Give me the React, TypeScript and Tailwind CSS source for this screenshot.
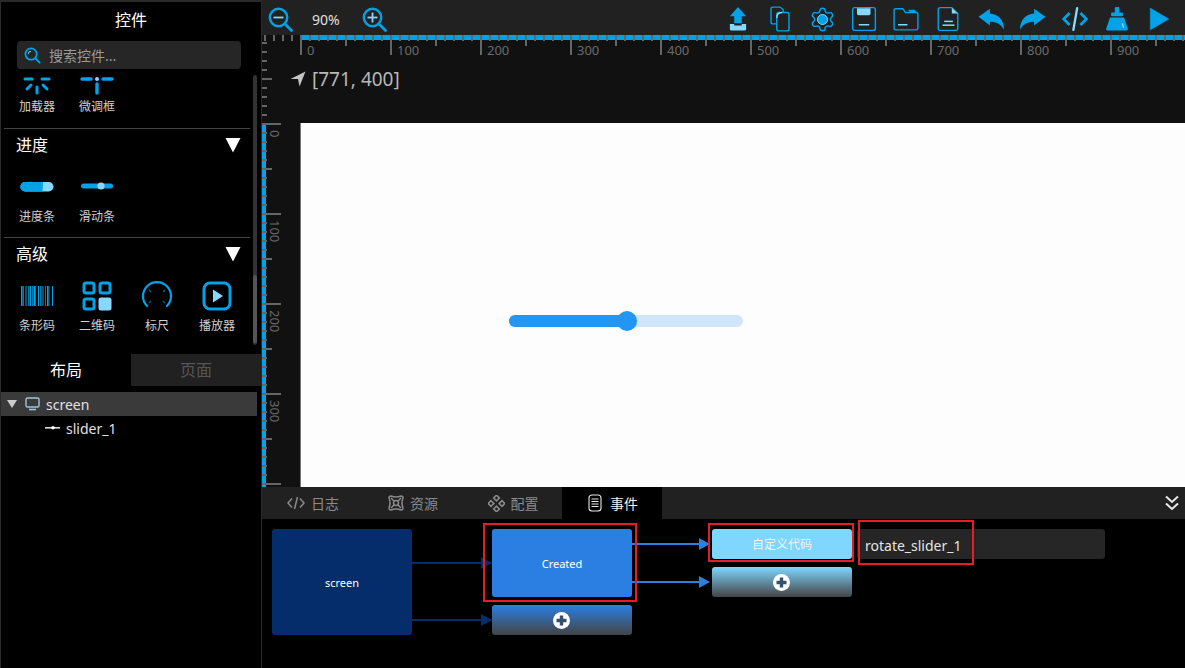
import { Settings } from "lucide-react";
import type { ReactNode } from "react";

const BLUE = "#00a2e8";
const LIGHT = "#86d8ff";

function Ico({ size = 26, vb = 24, children }: { size?: number; vb?: number; children: ReactNode }) {
  return (
    <svg width={size} height={size} viewBox={`0 0 ${vb} ${vb}`} fill="none">
      {children}
    </svg>
  );
}

const toolbarIcons = [
  <Ico key="upload">
    <path d="M12 1 L19.5 9.5 H15.5 V16 H8.5 V9.5 H4.5 Z" fill={BLUE} />
    <path d="M4.5 16.5 H8.5 V18 H15.5 V16.5 H19.5 V21.5 Q19.5 22.5 18.5 22.5 H5.5 Q4.5 22.5 4.5 21.5 Z" fill={LIGHT} />
  </Ico>,
  <Ico key="copy">
    <path d="M9 16.5 H5.5 Q3.7 16.5 3.7 14.7 V2.8 Q3.7 1 5.5 1 H12 L15 3.5 V6" stroke={BLUE} strokeWidth="1.3" />
    <path d="M9 8 Q9 6 11 6 H18.3 Q20.3 6 20.3 8 V21 Q20.3 23 18.3 23 H11 Q9 23 9 21 Z" stroke={BLUE} strokeWidth="1.3" />
    <path d="M9 11 Q9 6 14 6" stroke={LIGHT} strokeWidth="1.3" />
  </Ico>,
  <span key="gear" className="relative flex items-center justify-center">
    <Settings size={27} color={BLUE} strokeWidth={1.3} />
    <span className="absolute w-[11px] h-[11px] rounded-full bg-[#00a2e8] border border-[#86d8ff]" />
  </span>,
  <Ico key="save">
    <rect x="1.5" y="1.5" width="21" height="21" rx="2" stroke={BLUE} strokeWidth="1.3" />
    <path d="M5.5 2 H18 V7 Q18 8.5 16.5 8.5 H7 Q5.5 8.5 5.5 7 Z" fill={LIGHT} />
    <rect x="7" y="16.5" width="10" height="1.5" rx="0.7" fill={LIGHT} />
  </Ico>,
  <Ico key="folder">
    <path d="M1 4 Q1 2.5 2.5 2.5 H9 L11.5 6 H21.5 Q23 6 23 7.5 V20.5 Q23 22 21.5 22 H2.5 Q1 22 1 20.5 Z" stroke={BLUE} strokeWidth="1.3" />
    <path d="M14 3.5 H20 L22.5 6.5 H16 Z" fill={BLUE} />
    <rect x="4.5" y="16.5" width="9" height="1.5" rx="0.7" fill={LIGHT} />
  </Ico>,
  <Ico key="file">
    <path d="M5 1.5 H15.5 L21 7 V21 Q21 22.5 19.5 22.5 H5 Q3 22.5 3 21 V3 Q3 1.5 5 1.5 Z" stroke={BLUE} strokeWidth="1.3" />
    <path d="M15.5 1.5 L21 7 H15.5 Z" fill={LIGHT} />
    <rect x="8.5" y="13.5" width="8" height="1.4" fill={LIGHT} />
    <rect x="7" y="17" width="11" height="1.4" fill={LIGHT} />
  </Ico>,
  <Ico key="undo">
    <path d="M0.5 10 L11 2.5 V7 C19 7.5 24 13 24 22 C21 16.5 17 14.5 11 14.5 V18 Z" fill={BLUE} />
  </Ico>,
  <Ico key="redo">
    <path d="M23.5 10 L13 2.5 V7 C5 7.5 0 13 0 22 C3 16.5 7 14.5 13 14.5 V18 Z" fill={BLUE} />
  </Ico>,
  <Ico key="code">
    <path d="M7 6.5 L1.5 12 L7 17.5" stroke={BLUE} strokeWidth="2.6" />
    <path d="M17 6.5 L22.5 12 L17 17.5" stroke={BLUE} strokeWidth="2.6" />
    <path d="M14 2 L10.5 22" stroke={LIGHT} strokeWidth="2.2" strokeLinecap="round" />
  </Ico>,
  <Ico key="brush">
    <rect x="10" y="1" width="4" height="6" rx="1" fill={BLUE} />
    <rect x="6.5" y="6" width="11" height="3.5" rx="1" fill={BLUE} />
    <path d="M5.5 10.5 H18.5 L22 21 Q22.2 22.5 21 22.5 H3 Q1.8 22.5 2 21 Z" fill={BLUE} />
    <path d="M17 16 L18 20" stroke={LIGHT} strokeWidth="1.3" />
  </Ico>,
  <Ico key="play">
    <path d="M4 2 L21 12 L4 22 Z" fill={BLUE} stroke={BLUE} strokeWidth="0.6" strokeLinejoin="round" />
  </Ico>,
];

function ZoomIcon({ plus }: { plus?: boolean }) {
  return (
    <svg width="25" height="25" viewBox="0 0 25 25" fill="none">
      <circle cx="10.5" cy="10.5" r="8.7" stroke={BLUE} strokeWidth="2.4" />
      <path d="M17 17 L23.5 23.5" stroke={BLUE} strokeWidth="2.8" strokeLinecap="round" />
      <path d="M5.5 10.5 H15.5" stroke={LIGHT} strokeWidth="1.8" />
      {plus && <path d="M10.5 5.5 V15.5" stroke={LIGHT} strokeWidth="1.8" />}
    </svg>
  );
}

const widgetIcons: Record<string, ReactNode> = {
  spinner: (
    <svg width="34" height="18" viewBox="0 0 34 18" fill="none" stroke={BLUE} strokeWidth="3" strokeLinecap="round">
      <path d="M5 2 H12" />
      <path d="M22 2 H29" />
      <path d="M11 8 L7 12" />
      <path d="M23 8 L27 12" />
      <path d="M17 10 V16" />
    </svg>
  ),
  spinbox: (
    <svg width="34" height="18" viewBox="0 0 34 18" fill="none">
      <path d="M2 2 H11 M23 2 H32 M17 7 V16" stroke={BLUE} strokeWidth="3.4" strokeLinecap="round" />
      <circle cx="17" cy="2" r="2" fill={LIGHT} />
    </svg>
  ),
  progress: (
    <svg className="mt-[1px]" width="34" height="12" viewBox="0 0 34 12">
      <rect x="0.5" y="1" width="33" height="9.5" rx="4.7" fill={LIGHT} />
      <path d="M5 1 H23 L22.5 10.5 H5 A4.7 4.7 0 0 1 5 1 Z" fill={BLUE} />
    </svg>
  ),
  slider: (
    <svg width="34" height="12" viewBox="0 0 34 12">
      <rect x="1" y="3.5" width="32" height="5" rx="2.5" fill={BLUE} />
      <circle cx="21" cy="6" r="3.6" fill={LIGHT} />
    </svg>
  ),
  barcode: (
    <svg width="34" height="22" viewBox="0 0 34 22">
      {[1, 3, 5.5, 8, 10, 12, 13.5, 15, 18, 20, 22.5, 25, 27, 28.5, 32].map((x, i) => (
        <rect key={x} x={x} y="1" width={i % 3 === 0 ? 1.6 : 1} height="20" fill={i % 2 ? "#0a76a8" : BLUE} />
      ))}
    </svg>
  ),
  qr: (
    <svg width="30" height="30" viewBox="0 0 30 30" fill="none">
      <rect x="2" y="2" width="10" height="10" rx="2" stroke={BLUE} strokeWidth="3" />
      <rect x="18" y="2" width="10" height="10" rx="2" stroke={BLUE} strokeWidth="3" />
      <rect x="2" y="18" width="10" height="10" rx="2" stroke={BLUE} strokeWidth="3" />
      <rect x="16.5" y="16.5" width="13" height="13" rx="2.5" fill={LIGHT} />
    </svg>
  ),
  gauge: (
    <svg width="32" height="30" viewBox="0 0 32 30" fill="none">
      <path d="M6 25 A14 14 0 1 1 26 25" stroke={BLUE} strokeWidth="2.2" strokeLinecap="round" />
      <path d="M8 9 L10 11 M24 9 L22 11 M8 22 L10 20 M24 22 L22 20" stroke="#0a5f86" strokeWidth="1.4" />
    </svg>
  ),
  player: (
    <svg width="30" height="30" viewBox="0 0 30 30" fill="none">
      <rect x="2" y="2" width="26" height="26" rx="6" stroke={BLUE} strokeWidth="3" />
      <path d="M11 8.5 L21 15 L11 21.5 Z" fill={LIGHT} />
    </svg>
  ),
};

function Widget({ icon, label, h, gap }: { icon: string; label: string; h: number; gap: number }) {
  return (
    <div className="w-[60px] flex flex-col items-center">
      <div className="flex items-center justify-center" style={{ height: h, marginBottom: gap }}>
        {widgetIcons[icon]}
      </div>
      <span className="text-[12px] leading-[16px] text-[#d0d0d0]">{label}</span>
    </div>
  );
}

function SectionHead({ title }: { title: string }) {
  return (
    <div className="flex items-center justify-between h-[32px] pl-[12px] pr-[17px]">
      <span className="text-[16px] text-white">{title}</span>
      <svg width="16" height="16" viewBox="0 0 16 16">
        <path d="M0.5 1 H15.5 L8 15.5 Z" fill="#fff" />
      </svg>
    </div>
  );
}

function Sidebar() {
  return (
    <aside className="w-[262px] h-full shrink-0 flex flex-col bg-black border-t-2 border-l border-r border-[#2a2a2a]">
      <div className="h-[36px] flex items-center justify-center text-[16px] text-white">控件</div>
      <div className="ml-[16px] w-[224px] h-[28px] mt-[3px] rounded bg-[#262626] flex items-center pl-[7px] gap-[8px]">
        <svg width="17" height="17" viewBox="0 0 18 18" fill="none">
          <circle cx="7.5" cy="7.5" r="6" stroke={BLUE} strokeWidth="1.8" />
          <path d="M12 12 L16.5 16.5" stroke={BLUE} strokeWidth="2" strokeLinecap="round" />
          <path d="M4.5 7.5 A3 3 0 0 1 7.5 4.5" stroke={LIGHT} strokeWidth="1" />
        </svg>
        <span className="text-[14px] text-[#9a9a9a]">搜索控件...</span>
      </div>
      <div className="relative h-[270px] mt-[6px] overflow-hidden">
        <div className="px-[3px]">
          <div className="flex px-[3px]">
            <Widget icon="spinner" label="加载器" h={21} gap={3} />
            <Widget icon="spinbox" label="微调框" h={21} gap={3} />
          </div>
          <div className="mt-[13px] mr-[8px] border-t border-[#444]" />
          <SectionHead title="进度" />
          <div className="flex px-[3px] mt-[10px]">
            <Widget icon="progress" label="进度条" h={30} gap={8} />
            <Widget icon="slider" label="滑动条" h={30} gap={8} />
          </div>
          <div className="mt-[12px] mr-[8px] border-t border-[#444]" />
          <SectionHead title="高级" />
          <div className="flex px-[3px] mt-[8px]">
            <Widget icon="barcode" label="条形码" h={36} gap={4} />
            <Widget icon="qr" label="二维码" h={36} gap={4} />
            <Widget icon="gauge" label="标尺" h={36} gap={4} />
            <Widget icon="player" label="播放器" h={36} gap={4} />
          </div>
        </div>
        <div className="absolute right-[4px] top-0 bottom-0 w-[4px] rounded-full bg-[#333]">
          <div className="absolute bottom-[2px] h-[68px] w-full rounded-full bg-[#555]" />
        </div>
      </div>
      <div className="flex h-[32px] mt-[9px] text-[16px]">
        <div className="w-[130px] flex items-center justify-center text-white">布局</div>
        <div className="flex-1 flex items-center justify-center bg-[#212121] text-[#555]">页面</div>
      </div>
      <div className="mt-[6px] mr-[4px] text-[14px] text-[#e0e0e0]">
        <div className="h-[24px] bg-[#3a3a3a] flex items-center pl-[5px]">
          <svg width="12" height="10" viewBox="0 0 12 10">
            <path d="M1 1 H11 L6 9 Z" fill="#ccc" />
          </svg>
          <svg className="ml-[7px]" width="15" height="14" viewBox="0 0 15 14" fill="none">
            <rect x="1" y="1" width="13" height="9" rx="1.5" stroke="#9fc6dc" strokeWidth="1.4" />
            <path d="M4 12.5 H11" stroke="#9fc6dc" strokeWidth="1.6" />
          </svg>
          <span className="ml-[6px]">screen</span>
        </div>
        <div className="h-[24px] flex items-center pl-[44px]">
          <svg width="15" height="6" viewBox="0 0 15 6">
            <rect x="0" y="2" width="15" height="1.6" fill="#ddd" />
            <circle cx="8" cy="2.8" r="1.8" fill="#fff" />
          </svg>
          <span className="ml-[6px]">slider_1</span>
        </div>
      </div>
    </aside>
  );
}

const hTicks = Array.from({ length: 104 }, (_, i) => 2 + i * 9);
const vTicks = Array.from({ length: 51 }, (_, i) => 7 + i * 9);

function Rulers() {
  return (
    <svg className="absolute left-0 top-0" width="923" height="452" viewBox="0 0 923 452">
      <rect x="39" y="0" width="884" height="5" fill={BLUE} />
      <rect x="0" y="88" width="4" height="364" fill={BLUE} />
      {hTicks.map((x, i) => {
        const n = i - 4;
        const long = n % 10 === 0;
        const mid = n % 5 === 0;
        return <rect key={x} x={x} y="0" width="2" height={long ? 20 : mid ? 11 : 6} fill="#666" />;
      })}
      {vTicks.map((y, i) => {
        const n = i - 9;
        const long = n % 10 === 0;
        const mid = n % 5 === 0;
        return <rect key={y} x="0" y={y} width={long ? 19 : mid ? 10 : 5} height="2" fill="#666" />;
      })}
      <g fill="#6a6a6a" fontSize="13" fontFamily="'Noto Sans', sans-serif">
        {[0, 100, 200, 300, 400, 500, 600, 700, 800, 900].map((v, i) => (
          <text key={v} x={45 + i * 90} y="20">
            {v}
          </text>
        ))}
        {[0, 100, 200, 300].map((v, i) => (
          <text key={v} transform={`translate(8 ${95 + i * 90}) rotate(90)`}>
            {v}
          </text>
        ))}
      </g>
    </svg>
  );
}

function TabIcon({ name }: { name: string }) {
  const c = name === "event" ? "#e8e8e8" : "#8a8a8a";
  if (name === "code")
    return (
      <svg width="18" height="14" viewBox="0 0 18 14" fill="none" stroke={c} strokeWidth="1.5">
        <path d="M5 2.5 L1 7 L5 11.5 M13 2.5 L17 7 L13 11.5 M10.5 1 L7.5 13" />
      </svg>
    );
  if (name === "res")
    return (
      <svg width="16" height="16" viewBox="0 0 16 16" fill="none" stroke={c} strokeWidth="1.5">
        <circle cx="8" cy="8" r="2.5" />
        <path d="M3 1 Q8 3 13 1 Q15 1 15 3 Q13 8 15 13 Q15 15 13 15 Q8 13 3 15 Q1 15 1 13 Q3 8 1 3 Q1 1 3 1 Z" />
        <path d="M3 3 L6 6 M13 3 L10 6 M3 13 L6 10 M13 13 L10 10" />
      </svg>
    );
  if (name === "cfg")
    return (
      <svg width="17" height="17" viewBox="0 0 17 17" fill="none" stroke={c} strokeWidth="1.6">
        <rect x="6.5" y="1" width="4" height="4" transform="rotate(45 8.5 3)" />
        <rect x="6.5" y="12" width="4" height="4" transform="rotate(45 8.5 14)" />
        <rect x="1" y="6.5" width="4" height="4" transform="rotate(45 3 8.5)" />
        <rect x="12" y="6.5" width="4" height="4" transform="rotate(45 14 8.5)" />
      </svg>
    );
  return (
    <svg width="14" height="18" viewBox="0 0 14 18" fill="none" stroke={c} strokeWidth="1.1">
      <rect x="1" y="1" width="12" height="16" rx="3" />
      <path d="M3.5 5 H10.5 M3.5 7.5 H10.5 M3.5 10 H10.5 M3.5 12.5 H10.5" />
    </svg>
  );
}

const tabs = [
  { id: "code", label: "日志" },
  { id: "res", label: "资源" },
  { id: "cfg", label: "配置" },
  { id: "event", label: "事件" },
];

function AddButton({ from }: { from: string }) {
  return (
    <div
      className="w-[140px] h-[30px] rounded-[3px] flex items-center justify-center"
      style={{ background: `linear-gradient(${from}, #444)` }}
    >
      <svg className="mt-[1px] ml-[-1px]" width="17" height="17" viewBox="0 0 17 17">
        <circle cx="8.5" cy="8.5" r="8.5" fill="#fff" />
        <path d="M8.5 3.5 V13.5 M3.5 8.5 H13.5" stroke="#34506e" strokeWidth="3.4" />
      </svg>
    </div>
  );
}

function Connectors() {
  const arrow = (y: number, x1: number, x2: number, c: string) => (
    <g key={`${y}-${x1}`}>
      <path d={`M${x1} ${y} H${x2 - 8}`} stroke={c} strokeWidth="2" />
      <path d={`M${x2 - 11} ${y - 6} L${x2} ${y} L${x2 - 11} ${y + 6} Z`} fill={c} />
    </g>
  );
  return (
    <svg className="absolute left-0 top-0 pointer-events-none" width="923" height="149" viewBox="0 0 923 149">
      {arrow(44, 150, 230, "#052d6b")}
      {arrow(101, 150, 230, "#052d6b")}
      {arrow(25, 370, 448, "#2b7fe3")}
      {arrow(63, 370, 448, "#2b7fe3")}
    </svg>
  );
}

function EventPanel() {
  return (
    <div className="relative flex-1 bg-black pl-[10px] pt-[10px] flex text-[11px] text-white">
      <div className="w-[140px] h-[106px] pt-[2px] rounded-[3px] bg-[#052d6b] flex items-center justify-center">screen</div>
      <div className="ml-[80px] w-[140px] flex flex-col gap-[8px]">
        <div className="h-[68px] pt-[2px] rounded-[3px] bg-[#2b7fe3] flex items-center justify-center">Created</div>
        <AddButton from="#2b7fe3" />
      </div>
      <div className="ml-[80px] w-[140px] flex flex-col gap-[8px]">
        <div className="h-[30px] pt-[2px] rounded-[3px] bg-[#7fd6ff] flex items-center justify-center text-[12px] text-[#f4f4f4]">自定义代码</div>
        <AddButton from="#7fd6ff" />
      </div>
      <div className="ml-[5px] w-[248px] h-[30px] pt-[2px] rounded-[3px] bg-[#262626] flex items-center pl-[8px] text-[14px] text-[#e4e4e4]">
        rotate_slider_1
      </div>
      <Connectors />
      <div className="absolute left-[221px] top-[4px] w-[154px] h-[79px] border-2 border-[#e81c24]" />
      <div className="absolute left-[446px] top-[4px] w-[146px] h-[39px] border-2 border-[#e81c24]" />
      <div className="absolute left-[596px] top-[1px] w-[116px] h-[45px] border-2 border-[#e81c24]" />
    </div>
  );
}

export default function App() {
  return (
    <div
      className="w-[1185px] h-[668px] flex overflow-hidden bg-black"
      style={{ fontFamily: "'Noto Sans', 'Noto Sans CJK SC', sans-serif" }}
    >
      <Sidebar />
      <main className="flex-1 min-w-0 flex flex-col">
        <div className="h-[35px] pt-[3px] bg-[#212121] flex items-center">
          <div className="ml-[6px]">
            <ZoomIcon />
          </div>
          <span className="ml-[19px] w-[34px] text-[14px] text-[#e0e0e0]">90%</span>
          <div className="ml-[16px]">
            <ZoomIcon plus />
          </div>
          <div className="ml-auto mr-[5px] flex">
            {toolbarIcons.map((icon, i) => (
              <div key={i} className="w-[42.1px] flex items-center justify-center">
                {icon}
              </div>
            ))}
          </div>
        </div>
        <div className="relative h-[452px] bg-[#111] overflow-hidden">
          <div className="ml-[38px] mt-[88px] h-[364px] border-l border-[#777] bg-[#fdfdfe] pl-[208px] pt-[192px]">
            <div className="relative w-[234px] h-[12px] rounded-full bg-[#cfe5fa]">
              <div className="w-[118px] h-full rounded-full bg-[#2196f3]" />
              <div className="absolute left-[108px] top-[-4px] w-[20px] h-[20px] rounded-full bg-[#2196f3]" />
            </div>
          </div>
          <Rulers />
          <div className="absolute left-[28px] top-[30px] flex items-center gap-[6px] text-[19px] text-[#b8b8b8]">
            <svg width="16" height="16" viewBox="0 0 16 16">
              <path d="M0.5 8 L15.5 0.5 L9.5 15.5 L8 8 Z" fill="#c4c4c4" />
            </svg>
            [771, 400]
          </div>
        </div>
        <div className="h-[32px] bg-[#212121] flex items-stretch">
          {tabs.map((t) => (
            <div
              key={t.id}
              className={
                t.id === "event"
                  ? "w-[100px] pl-[2px] bg-black flex items-center justify-center gap-[8px] text-[14px] text-[#f0f0f0]"
                  : "w-[100px] pl-[2px] flex items-center justify-center gap-[6px] text-[14px] text-[#8a8a8a]"
              }
            >
              <TabIcon name={t.id} />
              {t.label}
            </div>
          ))}
          <div className="ml-auto mr-[5px] flex items-center">
            <svg width="16" height="16" viewBox="0 0 16 16" fill="none" stroke="#e8e8e8" strokeWidth="2">
              <path d="M2 1.5 L8 7 L14 1.5 M2 8.5 L8 14 L14 8.5" />
            </svg>
          </div>
        </div>
        <EventPanel />
      </main>
    </div>
  );
}
